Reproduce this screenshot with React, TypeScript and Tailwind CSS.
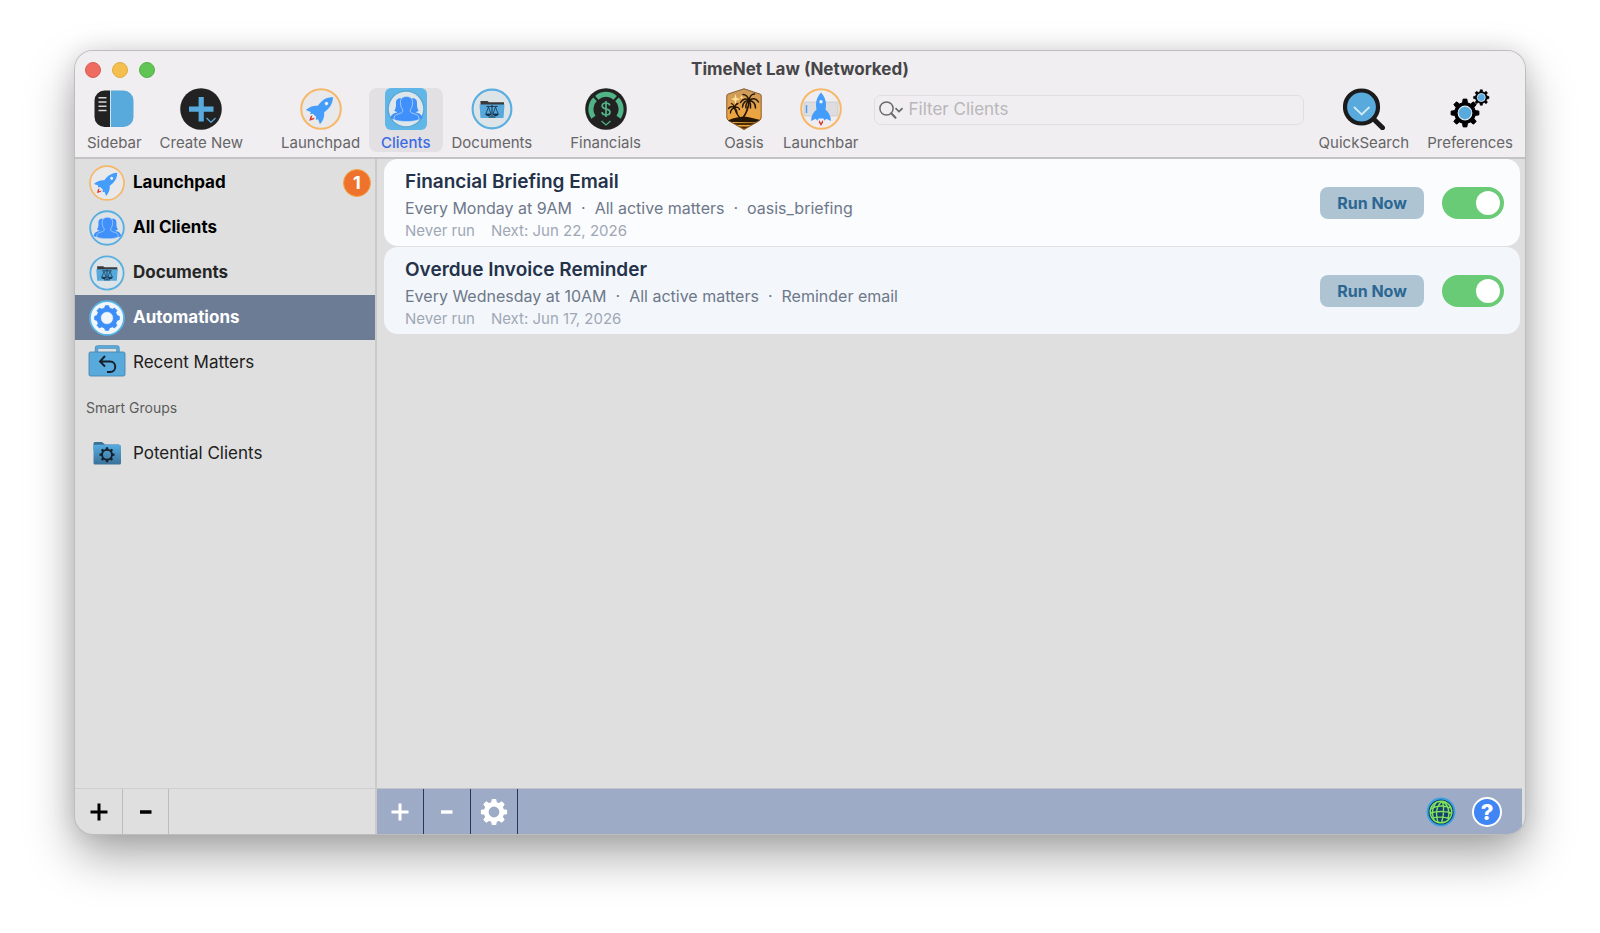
import React, { useState } from 'react';

const gearPath = (cx: number, cy: number, outer: number, inner: number, teeth: number) => {
  const step = (Math.PI * 2) / teeth;
  const points: string[] = [];
  for (let i = 0; i < teeth; i++) {
    const a = i * step - Math.PI / 2;
    const corners: [number, number][] = [
      [a - step * 0.3, inner],
      [a - step * 0.17, outer],
      [a + step * 0.17, outer],
      [a + step * 0.3, inner],
    ];
    corners.forEach(([angle, r]) => {
      points.push(`${(cx + Math.cos(angle) * r).toFixed(2)} ${(cy + Math.sin(angle) * r).toFixed(2)}`);
    });
  }
  return `M${points.join('L')}Z`;
};

interface IconProps {
  className?: string;
}

const SidebarIcon: React.FC<IconProps> = ({ className }) => (
  <svg viewBox="0 0 42 42" className={className} aria-hidden="true">
    <path d="M17 2.500H11.500A10 10 0 0 0 1.500 12.500V29A10 10 0 0 0 11.500 39H17Z" fill="#222" />
    <path d="M18 2.500H30.500A10 10 0 0 1 40.500 12.500V29A10 10 0 0 1 30.500 39H18Z" fill="#58a9dc" />
    <path d="M17.500 2.500V39" stroke="#cfe6f5" strokeWidth="1" />
    <path d="M5.500 9.800H13.500M5.500 14H13.500M5.500 18.300H13.500M5.500 22.600H13.500" stroke="#d8d6d8" strokeWidth="1.500" />
  </svg>
);

const CreateIcon: React.FC<IconProps> = ({ className }) => (
  <svg viewBox="0 0 42 42" className={className} aria-hidden="true">
    <circle cx="21" cy="21" r="20.800" fill="#222" />
    <path d="M21.200 9V33.500M9 21.200H33.500" stroke="#58a9dc" strokeWidth="5.200" />
    <path d="M26.500 30L31 34.300L35.500 30" fill="none" stroke="#58a9dc" strokeWidth="1.200" />
  </svg>
);

const Rocket: React.FC = () => (
  <>
    <path
      d="M21 4.500C24.300 8 26 12 26 16.500C26 18.500 25.800 20 25.500 21.500C28.700 24 30.800 28 31 33L26.200 30.800L24.800 32.800L23.300 30.500H18.700L17.200 32.800L15.800 30.800L11 33C11.200 28 13.300 24 16.500 21.500C16.200 20 16 18.500 16 16.500C16 12 17.700 8 21 4.500Z"
      fill="#459dfb"
    />
    <circle cx="21" cy="13.800" r="1.700" fill="#f1f1f3" />
    <path d="M19.300 32L18.800 34.300L21 38L23.200 34.300L22.700 32L21 35Z" fill="#d8382d" />
    <path d="M20 32.500L21 34.500L22 32.500Z" fill="#f4e3d6" />
  </>
);

const LaunchpadIcon: React.FC<IconProps> = ({ className }) => (
  <svg viewBox="0 0 42 42" className={className} aria-hidden="true">
    <circle cx="21" cy="21" r="19.800" fill="#e9e8ea" stroke="#f6b867" strokeWidth="2" />
    <g transform="rotate(45 21 21) translate(0 -0.500)">
      <Rocket />
    </g>
  </svg>
);

const LaunchbarIcon: React.FC<IconProps> = ({ className }) => (
  <svg viewBox="0 0 42 42" className={className} aria-hidden="true">
    <circle cx="21" cy="21" r="19.800" fill="#efedf0" stroke="#f6b867" strokeWidth="2" />
    <rect x="4" y="14" width="34" height="14" rx="1" fill="#dddddf" stroke="#c9c9cc" strokeWidth="0.800" />
    <path d="M6.500 17V25" stroke="#459dfb" strokeWidth="1.400" />
    <Rocket />
  </svg>
);

const People: React.FC = () => (
  <g fill="#3f90fb">
    <path d="M16.500 10.300C12 9.800 10.800 12.300 11 15.500C11.200 19 10.700 20.500 9.300 22.800C10.500 23.700 12 24 12.500 24.300C8 25.300 5.800 27 5.500 30.300C7.500 31.500 11 32 14 32L19 22Z" />
    <path d="M26.500 10.300C31 9.800 32.200 12.300 32 15.500C31.800 19 32.300 20.500 33.700 22.800C32.500 23.700 31 24 30.500 24.300C35 25.300 37.200 27 37.500 30.300C35.500 31.500 32 32 29 32L24 22Z" />
    <path
      d="M21.500 8.500C17.200 8.500 15.200 11 15.400 14.800C15.600 18.500 16.600 20.600 17.800 22C18 24.200 17 25 13.800 25.800C10.500 26.600 9 27.800 9 30.800C9 32.500 15 33.500 21.500 33.500C28 33.500 34 32.500 34 30.800C34 27.800 32.500 26.600 29.200 25.800C26 25 25 24.200 25.200 22C26.400 20.600 27.400 18.500 27.600 14.800C27.800 11 25.800 8.500 21.500 8.500Z"
      stroke="#cfdfee"
      strokeWidth="0.700"
    />
  </g>
);

const ClientsTileIcon: React.FC<IconProps> = ({ className }) => (
  <svg viewBox="0 0 42 42" className={className} aria-hidden="true">
    <rect width="42" height="42" rx="6" fill="#60b6e6" />
    <circle cx="21" cy="21" r="18.500" fill="#5aa5d4" />
    <circle cx="21" cy="21" r="17.200" fill="#dce6eb" />
    <People />
  </svg>
);

const ClientsIcon: React.FC<IconProps> = ({ className }) => (
  <svg viewBox="0 0 42 42" className={className} aria-hidden="true">
    <circle cx="21" cy="21" r="19.600" fill="#dde2e6" stroke="#5aaee0" strokeWidth="2.200" />
    <People />
  </svg>
);

const DocumentsIcon: React.FC<IconProps> = ({ className }) => (
  <svg viewBox="0 0 42 42" className={className} aria-hidden="true">
    <circle cx="21" cy="21" r="19.400" fill="#dde4e8" stroke="#5aaee0" strokeWidth="2.100" />
    <path d="M9.500 13H16.500L18 14.300H33V19H9.500Z" fill="#3a3a3c" />
    <path d="M8.500 16.500H33.500L32.500 30H9.500Z" fill="#57a8db" />
    <g stroke="#17324a" fill="none" strokeWidth="1">
      <path d="M15.500 18.500C18 18 19.500 19 21 18.200C22.500 19 24 18 26.500 18.500M21 17V28.500M17.500 29H24.500" />
      <path d="M17.500 19L14.800 26H20L17.500 19ZM24.500 19L22 26H27.200Z" strokeWidth="0.800" />
    </g>
    <path d="M14.300 26H20.300C19.500 28.700 15.200 28.700 14.300 26ZM21.700 26H27.700C27 28.700 22.500 28.700 21.700 26Z" fill="#17324a" />
  </svg>
);

const FinancialsIcon: React.FC<IconProps> = ({ className }) => (
  <svg viewBox="0 0 42 42" className={className} aria-hidden="true">
    <circle cx="21" cy="21" r="20.800" fill="#222" />
    <g fill="none" stroke="#50b487" strokeWidth="5">
      <path d="M8.400 29.200A14 14 0 0 1 10 11.300" />
      <path d="M11.800 9.800A14 14 0 0 1 30.200 9.800" />
      <path d="M32 11.300A14 14 0 0 1 33.600 29.200" />
    </g>
    <path d="M24.800 17.500C24.400 15.700 23 15 21 15C18.800 15 17.200 16 17.200 17.900C17.200 22 25 19.800 25 24C25 26 23.300 27 21 27C18.700 27 17.200 26 17 24.200M21 13V29" fill="none" stroke="#50b487" strokeWidth="1.700" />
    <path d="M16.500 33L21 37L25.500 33" fill="none" stroke="#50b487" strokeWidth="1.200" />
  </svg>
);

const OasisIcon: React.FC<IconProps> = ({ className }) => (
  <svg viewBox="0 0 42 42" className={className} aria-hidden="true">
    <defs>
      <linearGradient id="oasis" x1="0" y1="0" x2="0" y2="1">
        <stop offset="0" stopColor="#c99a5c" />
        <stop offset="0.500" stopColor="#e8a347" />
        <stop offset="1" stopColor="#f2a62f" />
      </linearGradient>
      <clipPath id="shield">
        <path d="M21 0.500L37.500 6Q38.500 6.500 38.500 8V29Q38.500 31.500 36.500 33L21 42L5.500 33Q3.500 31.500 3.500 29V8Q3.500 6.500 4.500 6Z" />
      </clipPath>
    </defs>
    <g clipPath="url(#shield)">
      <rect width="42" height="42" fill="url(#oasis)" />
      <path d="M4 33C9 30 14 29.500 21 28.500C28 29.500 33 31 38 32L33 34H8Z" fill="#241606" />
      <path d="M9 35L34 34.500L28 37H14ZM16 38.500H27L21 41Z" fill="#4b2c08" />
    </g>
    <path d="M21 0.800L37.300 6.200Q38.200 6.700 38.200 8V29Q38.200 31.300 36.300 32.700L21 41.600L5.700 32.700Q3.800 31.300 3.800 29V8Q3.800 6.700 4.700 6.200Z" fill="none" stroke="#7c5a38" strokeWidth="0.900" />
    <path d="M12.500 6L13.600 10L17.500 11L13.600 12.200L12.500 16.500L11.300 12.200L8 11L11.300 10ZM18.500 7L19 8.700L20.700 9.200L19 9.700L18.500 11.500L18 9.700L16.500 9.200L18 8.700Z" fill="#ffe29a" />
    <g fill="none" stroke="#241606" strokeLinecap="round">
      <path d="M26 12.500C25.700 18 24 24 20.500 29" strokeWidth="1.700" />
      <path d="M11.500 20C12.500 23.500 14 26.500 16.500 29.500" strokeWidth="1.400" />
      <path d="M26 12.500C23 10 19.500 11 17.500 14.500M26 12.500C22.500 12.500 20 15 19.500 19M26 12.500C25 9 23 6.500 20 6.500M26 12.500C26.500 8.500 29 6 31.500 6M26 12.500C29.500 9.500 33.500 10.500 35.500 14M26 12.500C30 13 32.500 16 32.500 20M26 12.500C27.500 15 28 17 27.500 20M26 12.500C23.500 14.500 22.500 17 23 20" strokeWidth="1.500" />
      <path d="M11.500 20C9.500 18 7 18.500 5.500 20.500M11.500 20C9.500 20.500 7.500 22.500 7.500 25M11.500 20C11 17.500 10 16 8.500 15.500M11.500 20C12 17.500 13 16 15 15.500M11.500 20C13.500 18.500 16 19.500 16.500 21.500M11.500 20C13 21 14 22.500 14 25" strokeWidth="1.300" />
    </g>
  </svg>
);

const QuickSearchIcon: React.FC<IconProps> = ({ className }) => (
  <svg viewBox="0 0 42 42" className={className} aria-hidden="true">
    <path d="M30 30.500L39.500 39.800" stroke="#1b1b1b" strokeWidth="5" strokeLinecap="round" />
    <circle cx="18.500" cy="19" r="16.500" fill="#58a9dc" stroke="#1b1b1b" strokeWidth="4.200" />
    <path d="M11 19L18.700 26.500L26.500 19" fill="none" stroke="#d5e9f6" strokeWidth="1.800" />
  </svg>
);

const PreferencesIcon: React.FC<IconProps> = ({ className }) => (
  <svg viewBox="0 0 42 42" className={className} aria-hidden="true">
    <path d={gearPath(16, 25, 14, 10.500, 8)} fill="#000" stroke="#000" strokeWidth="1" strokeLinejoin="round" />
    <circle cx="16" cy="25" r="6.800" fill="#58a9dc" stroke="#d7e9f4" strokeWidth="1.200" />
    <path d={gearPath(32.300, 9.500, 7.800, 5.900, 8)} fill="#000" stroke="#000" strokeWidth="0.600" strokeLinejoin="round" />
    <circle cx="32.300" cy="9.500" r="4" fill="#58a9dc" stroke="#d7e9f4" strokeWidth="0.900" />
  </svg>
);

const AutomationsIcon: React.FC<IconProps> = ({ className }) => (
  <svg viewBox="0 0 42 42" className={className} aria-hidden="true">
    <circle cx="21" cy="21" r="19.800" fill="#f1f6fb" stroke="#58b4ea" strokeWidth="2" />
    <path
      d={`${gearPath(21, 21, 14.500, 12, 8)}M28.500 21A7.500 7.500 0 1 0 13.500 21A7.500 7.500 0 1 0 28.500 21Z`}
      fill="#3d8df8"
      fillRule="evenodd"
      stroke="#3d8df8"
      strokeLinejoin="round"
    />
  </svg>
);

const RecentIcon: React.FC<IconProps> = ({ className }) => (
  <svg viewBox="0 0 38 38" className={className} aria-hidden="true">
    <path d="M8.500 10V4.500Q8.500 3 10 3H28.500Q30 3 30 4.500V10" fill="none" stroke="#4d8fba" strokeWidth="3.400" />
    <path d="M8.500 10V4.500Q8.500 3 10 3H28.500Q30 3 30 4.500V10" fill="none" stroke="#58a9dc" strokeWidth="2" />
    <rect x="1" y="8" width="36" height="24" rx="1.500" fill="#58a9dc" stroke="#4a86ad" strokeWidth="0.900" />
    <path d="M17 12L12 17.500L17 22.500M12 17.500H22C29 17.500 29 28 22 28H19" fill="none" stroke="#16202a" strokeWidth="1.900" />
  </svg>
);

const SmartFolderIcon: React.FC<IconProps> = ({ className }) => (
  <svg viewBox="0 0 28 24" className={className} aria-hidden="true">
    <defs>
      <linearGradient id="folder" x1="0" y1="0" x2="0" y2="1">
        <stop offset="0" stopColor="#56abe0" />
        <stop offset="1" stopColor="#3a7198" />
      </linearGradient>
    </defs>
    <path d="M0.500 8V1.500Q0.500 0 2 0H9L12 2.500H26V8Z" fill="#3a7093" />
    <rect x="0.500" y="2.800" width="27.500" height="19.700" rx="1.500" fill="url(#folder)" />
    <path d={`${gearPath(14, 12.700, 7.600, 5.900, 8)}M18 12.700A4 4 0 1 0 10 12.700A4 4 0 1 0 18 12.700Z`} fillRule="evenodd" fill="#15222f" />
  </svg>
);

const GearIcon: React.FC<IconProps> = ({ className }) => (
  <svg viewBox="0 0 28 28" className={className} aria-hidden="true">
    <path
      d={`${gearPath(14, 14, 12.600, 9.600, 8)}M20 14A6 6 0 1 0 8 14A6 6 0 1 0 20 14Z`}
      fill="#fff"
      fillRule="evenodd"
      stroke="#fff"
      strokeWidth="1.200"
      strokeLinejoin="round"
    />
  </svg>
);

const PlusIcon: React.FC<IconProps> = ({ className }) => (
  <svg viewBox="0 0 18 18" className={className} aria-hidden="true">
    <path d="M9 0.500V17.500M0.500 9H17.500" stroke="currentColor" strokeWidth="3" />
  </svg>
);

const MinusIcon: React.FC<IconProps> = ({ className }) => (
  <svg viewBox="0 0 18 18" className={className} aria-hidden="true">
    <path d="M3 9H14.500" stroke="currentColor" strokeWidth="3.400" />
  </svg>
);

const GlobeIcon: React.FC<IconProps> = ({ className }) => (
  <svg viewBox="0 0 30 30" className={className} aria-hidden="true">
    <circle cx="15" cy="15" r="13.500" fill="#17406f" stroke="#3aa0e0" strokeWidth="1.800" />
    <g fill="none" stroke="#7fe35c" strokeWidth="1.400">
      <circle cx="15" cy="15" r="10.800" />
      <path d="M16.500 4.200C11 8 9 15 12 25.500M16.500 4.200C18 10 18 18 15.500 25.800M16.500 4.200C22 8 24 15 22 22.500M10 5.500C6 11 5.500 17 8 23M5 11.500C11 8.500 19 8.500 25 11M4.500 16C11 14 20 14 25.500 16M6.500 21C12 19.500 18 20 23.500 21.500" />
    </g>
  </svg>
);

const SearchIcon: React.FC<IconProps> = ({ className }) => (
  <svg viewBox="0 0 24 18" className={className} aria-hidden="true" fill="none" stroke="#6b6a6c">
    <circle cx="7.500" cy="7.500" r="6.600" strokeWidth="1.500" />
    <path d="M12.200 12.300L16.500 16.800" strokeWidth="2" strokeLinecap="round" />
    <path d="M16.500 7.200L20 10.500L23.500 7.200" strokeWidth="1.700" />
  </svg>
);

interface ToolbarItemProps {
  label: string;
  icon: React.FC<IconProps>;
  active?: boolean;
}

const ToolbarItem: React.FC<ToolbarItemProps> = ({ label, icon: Icon, active }) => (
  <button
    className={`flex h-16 shrink-0 flex-col items-center gap-1 rounded-lg text-[15px] leading-[18px] ${
      active ? 'bg-[#e2e0e3] px-3 font-medium text-[#3a6be4]' : 'px-[9px] text-[#666567]'
    }`}
  >
    <Icon className="size-[42px] shrink-0" />
    <span>{label}</span>
  </button>
);

interface Automation {
  id: number;
  title: string;
  details: string[];
  next: string;
}

const automations: Automation[] = [
  {
    id: 1,
    title: 'Financial Briefing Email',
    details: ['Every Monday at 9AM', 'All active matters', 'oasis_briefing'],
    next: 'Next: Jun 22, 2026',
  },
  {
    id: 2,
    title: 'Overdue Invoice Reminder',
    details: ['Every Wednesday at 10AM', 'All active matters', 'Reminder email'],
    next: 'Next: Jun 17, 2026',
  },
];

const AutomationCard: React.FC<{ automation: Automation }> = ({ automation }) => {
  const [enabled, setEnabled] = useState(true);

  return (
    <li className="flex items-center gap-[18px] rounded-[14px] pr-4 pl-[21px] odd:bg-[#fbfcfe] even:bg-[#f3f7fb]">
      <div className="min-w-0 flex-1 pt-[9px] pb-1">
        <h2 className="text-[19px] leading-7 font-semibold text-[#24324a]">{automation.title}</h2>
        <p className="text-base leading-6 whitespace-pre text-[#6e7889]">{automation.details.join('  ·  ')}</p>
        <p className="flex gap-4 text-[15px] leading-[22px] text-[#a0a7b4]">
          <span>Never run</span>
          <span>{automation.next}</span>
        </p>
      </div>
      <button className="h-8 w-[104px] rounded-lg bg-[#aec4d2] text-base font-bold text-[#2b6792]">Run Now</button>
      <input
        type="checkbox"
        checked={enabled}
        onChange={(e) => setEnabled(e.target.checked)}
        aria-label={`Enable ${automation.title}`}
        className="flex h-8 w-[62px] appearance-none items-center rounded-full bg-gray-300 px-1 before:size-6 before:rounded-full before:bg-white checked:justify-end checked:bg-[#69cb76]"
      />
    </li>
  );
};

interface NavRowProps {
  label: string;
  icon: React.FC<IconProps>;
  iconClass?: string;
  className?: string;
  badge?: number;
}

const NavRow: React.FC<NavRowProps> = ({ label, icon: Icon, iconClass = 'size-9', className = '', badge }) => (
  <li>
    <a href="#" className={`flex h-[45px] items-center gap-2 pr-1 pl-[14px] text-[17px] ${className}`}>
      <span className="flex w-9 shrink-0 justify-center">
        <Icon className={iconClass} />
      </span>
      <span className="flex-1">{label}</span>
      {badge && (
        <span className="flex size-7 items-center justify-center rounded-full border border-[#f4a545] bg-[#ee722c] text-lg font-bold text-white">
          {badge}
        </span>
      )}
    </a>
  </li>
);

const App: React.FC = () => {
  const [filter, setFilter] = useState('');

  return (
    <div className="flex min-h-screen bg-white px-[75px] pt-[51px] pb-[99px] font-['Inter','Liberation_Sans',sans-serif]">
      <div className="flex min-w-0 flex-1 flex-col overflow-hidden rounded-[18px] bg-[#dfdfdf] shadow-[0_0_0_1px_#bdbdbd,0_22px_48px_rgba(0,0,0,0.34),0_0_24px_rgba(0,0,0,0.12)]">
        <header className="border-b-2 border-[#c3c2c4] bg-[#f0eef1]">
          <div className="grid h-[37px] grid-cols-3 items-center px-[10px]">
            <div className="flex gap-[11px]">
              <button aria-label="Close" className="size-4 rounded-full border border-[#dc5b50] bg-[#ed6b60]" />
              <button aria-label="Minimize" className="size-4 rounded-full border border-[#e0ab3f] bg-[#f5bf4f]" />
              <button aria-label="Zoom" className="size-4 rounded-full border border-[#52b144] bg-[#61c555]" />
            </div>
            <h1 className="text-center text-[17px] font-bold whitespace-nowrap text-[#464547]">TimeNet Law (Networked)</h1>
          </div>

          <div className="flex px-[3px] pb-[5px]">
            <ToolbarItem label="Sidebar" icon={SidebarIcon} />
            <ToolbarItem label="Create New" icon={CreateIcon} />
            <div className="w-5 shrink-0" />
            <ToolbarItem label="Launchpad" icon={LaunchpadIcon} />
            <ToolbarItem label="Clients" icon={ClientsTileIcon} active />
            <ToolbarItem label="Documents" icon={DocumentsIcon} />
            <div className="w-5 shrink-0" />
            <ToolbarItem label="Financials" icon={FinancialsIcon} />
            <div className="w-16 shrink-0" />
            <ToolbarItem label="Oasis" icon={OasisIcon} />
            <ToolbarItem label="Launchbar" icon={LaunchbarIcon} />
            <label className="mx-[6px] mt-[7px] flex h-[30px] min-w-0 flex-1 items-center gap-[6px] rounded-[7px] border border-[#e0dee1] px-1">
              <SearchIcon className="h-[18px] w-6 shrink-0" />
              <input
                type="text"
                value={filter}
                onChange={(e) => setFilter(e.target.value)}
                placeholder="Filter Clients"
                aria-label="Filter Clients"
                className="w-full min-w-0 bg-transparent text-[17px] outline-none placeholder:text-[#b9b7ba]"
              />
            </label>
            <ToolbarItem label="QuickSearch" icon={QuickSearchIcon} />
            <ToolbarItem label="Preferences" icon={PreferencesIcon} />
          </div>
        </header>

        <div className="flex flex-1">
          <aside className="flex w-[302px] shrink-0 flex-col border-r-2 border-[#cbcbcb]">
            <nav className="flex-1 pt-px">
              <ul>
                <NavRow label="Launchpad" icon={LaunchpadIcon} className="font-bold text-black" badge={1} />
                <NavRow label="All Clients" icon={ClientsIcon} className="font-bold text-black" />
                <NavRow label="Documents" icon={DocumentsIcon} className="font-bold text-[#262626]" />
                <NavRow label="Automations" icon={AutomationsIcon} className="bg-[#6c7c95] font-bold text-white" />
                <NavRow label="Recent Matters" icon={RecentIcon} iconClass="size-[38px] shrink-0" className="text-[#202020]" />
              </ul>
              <h2 className="flex h-[46px] items-center pl-[11px] text-sm text-[#5c5c5c]">Smart Groups</h2>
              <ul>
                <NavRow label="Potential Clients" icon={SmartFolderIcon} iconClass="h-6 w-7" className="text-[#202020]" />
              </ul>
            </nav>
            <div className="flex h-[46px] border-t border-[#cecece] text-black">
              <button aria-label="Add group" className="flex w-12 items-center justify-center border-r border-[#bcbcbc]">
                <PlusIcon className="size-[18px]" />
              </button>
              <button aria-label="Remove group" className="flex w-[46px] items-center justify-center border-r border-[#bcbcbc]">
                <MinusIcon className="size-[18px]" />
              </button>
            </div>
          </aside>

          <main className="flex min-w-0 flex-1 flex-col pr-[3px]">
            <ul className="flex flex-1 flex-col gap-px pr-[2px] pl-[7px]">
              {automations.map((automation) => (
                <AutomationCard key={automation.id} automation={automation} />
              ))}
            </ul>
            <footer className="flex h-[46px] items-center border-t border-[#bfc3cb] bg-[#9eabc6] text-white">
              <button aria-label="Add automation" className="flex h-full w-[47px] items-center justify-center border-r border-[#2a3858]">
                <PlusIcon className="size-[18px]" />
              </button>
              <button aria-label="Remove automation" className="flex h-full w-[47px] items-center justify-center border-r border-[#2a3858]">
                <MinusIcon className="size-[18px]" />
              </button>
              <button aria-label="Automation options" className="flex h-full w-[47px] items-center justify-center border-r border-[#2a3858]">
                <GearIcon className="size-7" />
              </button>
              <div className="ml-auto flex gap-4 pr-5">
                <button aria-label="Web access">
                  <GlobeIcon className="size-[30px]" />
                </button>
                <button
                  aria-label="Help"
                  className="flex size-[30px] items-center justify-center rounded-full border-2 border-white bg-[#3f85f3] text-[22px] leading-none font-extrabold"
                >
                  ?
                </button>
              </div>
            </footer>
          </main>
        </div>
      </div>
    </div>
  );
};

export default App;
